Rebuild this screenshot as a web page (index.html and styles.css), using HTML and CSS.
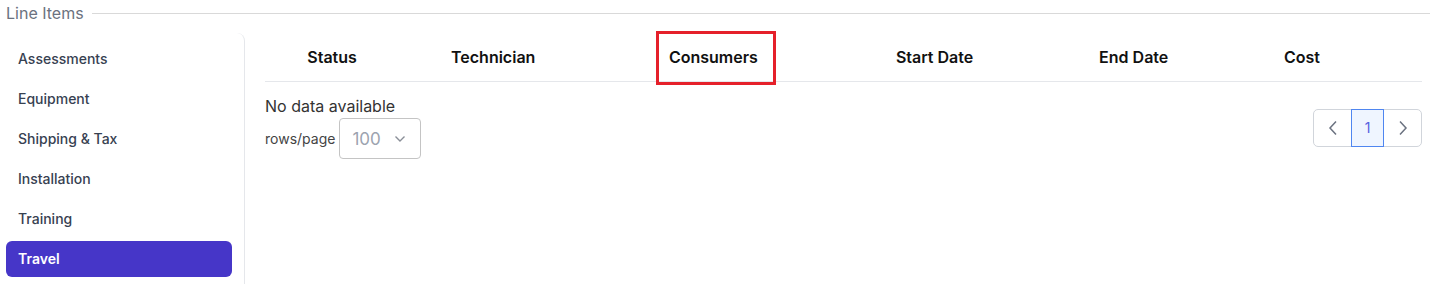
FILE: index.html
```html
<!DOCTYPE html>
<html lang="en">
<head>
    <meta charset="UTF-8">
    <meta name="viewport" content="width=device-width, initial-scale=1.0">
    <title>Line Items</title>
    <link rel="stylesheet" href="styles.css">
</head>
<body>
    <div class="page">
        <div class="section-title">
            <span>Line Items</span>
        </div>
        <div class="section-body">
            <ul class="side-nav">
                <li>Assessments</li>
                <li>Equipment</li>
                <li>Shipping &amp; Tax</li>
                <li>Installation</li>
                <li>Training</li>
                <li class="active">Travel</li>
            </ul>
            <div class="table-area">
                <table class="items-table">
                    <colgroup>
                        <col style="width: 134px">
                        <col style="width: 188px">
                        <col style="width: 252px">
                        <col style="width: 190px">
                        <col style="width: 208px">
                        <col style="width: 184px">
                    </colgroup>
                    <thead>
                        <tr>
                            <th>Status</th>
                            <th>Technician</th>
                            <th><span class="marked">Consumers</span></th>
                            <th>Start Date</th>
                            <th>End Date</th>
                            <th class="last">Cost</th>
                        </tr>
                    </thead>
                </table>
                <div class="table-footer">
                    <div class="footer-left">
                        <div class="no-data">No data available</div>
                        <div class="rows-per-page">
                            <span>rows/page</span>
                            <div class="select-box">
                                <span>100</span>
                                <svg width="12" height="8" viewBox="0 0 12 8"><path d="M1.5 1.5 L6 6 L10.5 1.5" fill="none" stroke="#8a8f98" stroke-width="1.4"/></svg>
                            </div>
                        </div>
                    </div>
                    <div class="pager">
                        <button class="pager-btn">
                            <svg width="10" height="16" viewBox="0 0 10 16"><path d="M8 1.5 L2 8 L8 14.5" fill="none" stroke="#6b7280" stroke-width="1.5"/></svg>
                        </button>
                        <button class="pager-btn current">1</button>
                        <button class="pager-btn">
                            <svg width="10" height="16" viewBox="0 0 10 16"><path d="M2 1.5 L8 8 L2 14.5" fill="none" stroke="#6b7280" stroke-width="1.5"/></svg>
                        </button>
                    </div>
                </div>
            </div>
        </div>
    </div>
</body>
</html>
```

FILE: styles.css
```css
body {
    margin: 0;
    font-family: Inter, 'Noto Sans', sans-serif;
    background-color: #fff;
    color: #333;
    overflow: hidden;
}
.page {
    padding: 0 18px 0 6px;
}
.section-title {
    display: flex;
    align-items: center;
    height: 26px;
    margin-bottom: 7px;
    font-size: 16px;
    color: #6b7280;
}
.section-title::after {
    content: "";
    flex: 1;
    height: 1px;
    background-color: #d9d9d9;
    margin-left: 8px;
}
.section-body {
    display: flex;
}
.side-nav {
    list-style: none;
    margin: 0;
    padding: 8px 12px 20px 0;
    width: 226px;
    border-right: 1px solid #e5e7eb;
    border-top-right-radius: 8px;
    display: flex;
    flex-direction: column;
    gap: 4px;
}
.side-nav li {
    height: 36px;
    line-height: 36px;
    padding-left: 12px;
    font-size: 14px;
    font-weight: 500;
    color: #374151;
    border-radius: 6px;
}
.side-nav li.active {
    background-color: #4636c8;
    color: #fff;
    font-weight: 600;
}
.table-area {
    flex: 1;
    padding: 0 8px 0 20px;
}
.items-table {
    width: 100%;
    table-layout: fixed;
    border-collapse: collapse;
}
.items-table th {
    height: 48px;
    padding: 0;
    text-align: center;
    font-size: 16px;
    font-weight: 600;
    color: #111;
    border-bottom: 1px solid #e5e7eb;
}
.items-table th.last {
    padding-right: 56px;
}
.marked {
    position: relative;
    line-height: 20px;
}
.marked::after {
    content: "";
    position: absolute;
    top: -16px;
    bottom: -18px;
    left: -13px;
    right: -18px;
    border: 3px solid #e5202a;
}
.table-footer {
    display: flex;
    justify-content: space-between;
    align-items: center;
    padding-top: 14px;
}
.no-data {
    font-size: 16px;
    line-height: 20px;
    color: #333;
    margin-bottom: 2px;
}
.rows-per-page {
    display: flex;
    align-items: center;
    gap: 4px;
    font-size: 14px;
    color: #444;
}
.select-box {
    display: flex;
    align-items: center;
    justify-content: space-between;
    box-sizing: border-box;
    width: 82px;
    height: 41px;
    padding: 0 14px 0 12px;
    border: 1px solid #c4c4c4;
    border-radius: 4px;
    font-size: 17px;
    color: #9ca3af;
}
.pager {
    display: flex;
    border: 1px solid #d1d5db;
    border-radius: 5px;
}
.pager-btn {
    width: 37px;
    height: 36px;
    border: none;
    background: none;
    display: flex;
    align-items: center;
    justify-content: center;
    padding: 0;
    font-family: inherit;
    font-size: 14px;
}
.pager-btn.current {
    width: 33px;
    height: 38px;
    margin: -1px 0;
    background-color: #eff5ff;
    border: 1px solid #4f86f0;
    color: #5560e0;
}
```
